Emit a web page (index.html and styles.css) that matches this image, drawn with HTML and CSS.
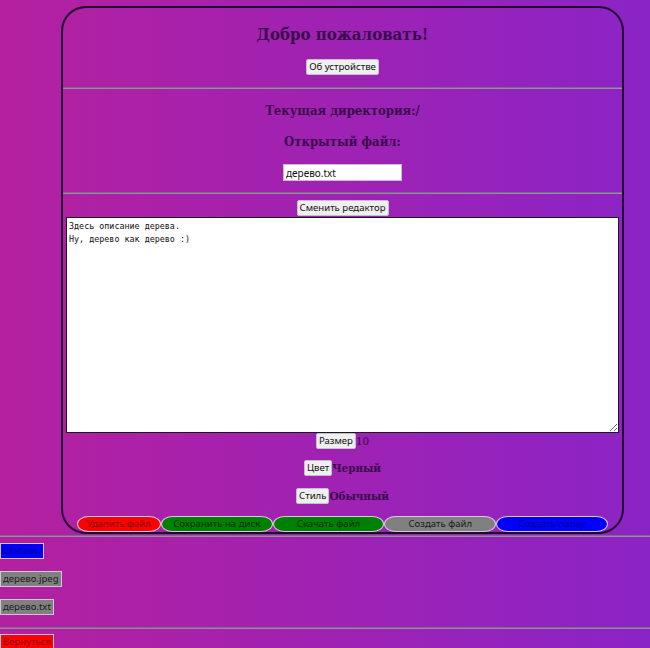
FILE: index.html
```html
<!DOCTYPE html>
<html lang="ru">
<head>
<meta charset="utf-8">
<title>Редактор</title>
<link rel="stylesheet" href="styles.css">
</head>
<body>
<main class="panel">
  <h1 class="title">Добро пожаловать!</h1>
  <div class="row row-about"><button class="btn">Об устройстве</button></div>
  <hr class="rule rule-1">
  <h3 class="sub sub-dir">Текущая директория:/</h3>
  <h3 class="sub sub-file">Открытый файл:</h3>
  <div class="row row-input"><input class="name" type="text" value="дерево.txt"></div>
  <hr class="rule rule-2">
  <div class="row row-switch"><button class="btn">Сменить редактор</button></div>
  <div class="editor-wrap"><textarea class="editor">Здесь описание дерева.
Ну, дерево как дерево :)</textarea></div>
  <div class="row row-size"><button class="btn">Размер</button><span class="val val-plain">10</span></div>
  <div class="row row-opt"><button class="btn">Цвет</button><span class="val">Черный</span></div>
  <div class="row row-opt"><button class="btn">Стиль</button><span class="val">Обычный</span></div>
  <div class="actions">
    <button class="act act-red act-narrow">Удалить файл</button>
    <button class="act act-green">Сохранить на диск</button>
    <button class="act act-green">Скачать файл</button>
    <button class="act act-gray">Создать файл</button>
    <button class="act act-blue">Создать папку</button>
  </div>
</main>
<hr class="rule rule-full rule-3">
<div class="files">
  <button class="file file-blue">Шаблон</button>
  <button class="file file-gray">дерево.jpeg</button>
  <button class="file file-gray">дерево.txt</button>
</div>
<hr class="rule rule-full rule-4">
<button class="file file-red">Вернуться</button>
</body>
</html>
```
FILE: styles.css
```css
html, body {
  margin: 0;
  padding: 0;
}
body {
  min-height: 648px;
  background: linear-gradient(to right, #b4209f, #8b24c6);
  font-family: "DejaVu Serif Condensed", "DejaVu Serif", serif;
  font-stretch: condensed;
  color: #3a0a4c;
  overflow: hidden;
}
.panel {
  box-sizing: border-box;
  height: 528px;
  margin: 6px 26px 0 61px;
  border: 2px solid #230532;
  border-radius: 25px;
  text-align: center;
  display: flex;
  flex-direction: column;
  align-items: stretch;
}
.title {
  margin: 14px 0 0;
  font-size: 16.7px;
  line-height: 24px;
  font-weight: bold;
}
.row {
  display: flex;
  justify-content: center;
  align-items: center;
  height: 16px;
}
.row-about { margin-top: 13px; }
.rule {
  height: 0;
  margin: 0;
  border: 0;
  border-top: 1px solid #7a6a86;
  border-bottom: 1px solid #9a8aa6;
}
.rule-1 { margin-top: 12px; }
.sub {
  margin: 13px 0 0;
  font-size: 13px;
  line-height: 18px;
  font-weight: bold;
}
.row-input { margin-top: 13px; height: 17px; }
.rule-2 { margin-top: 11px; }
.row-switch { margin-top: 6px; }
.btn {
  box-sizing: border-box;
  height: 16px;
  padding: 0 2px;
  font-family: "Noto Sans", sans-serif;
  font-stretch: normal;
  font-size: 9.6px;
  line-height: 14px;
  color: #111;
  background: #efefef;
  border: 1px solid #c9bccf;
  border-radius: 2px;
}
.name {
  box-sizing: border-box;
  width: 119px;
  height: 17px;
  padding: 0 2px;
  font-family: "Noto Sans", sans-serif;
  font-stretch: normal;
  font-size: 10px;
  color: #111;
  background: #fff;
  border: 1px solid #c9bccf;
  border-radius: 0;
}
.editor-wrap {
  margin-top: 1px;
  padding: 0 3px;
  display: flex;
}
.editor {
  box-sizing: border-box;
  width: 100%;
  height: 216px;
  margin: 0;
  padding: 2px 2px;
  font-family: "DejaVu Sans Mono", monospace;
  font-stretch: normal;
  font-size: 8.4px;
  line-height: 13px;
  color: #111;
  background: #fff;
  border: 1px solid #1a1a1a;
  resize: both;
}
.row-size { margin-top: 0; }
.row-opt { margin-top: 11px; }
.row-opt + .row-opt { margin-top: 12px; }
.val {
  font-size: 11.5px;
  font-weight: bold;
  line-height: 16px;
  color: #3a0a4c;
}
.val-plain { font-weight: normal; }
.actions {
  margin-top: auto;
  margin-bottom: 0;
  display: flex;
  justify-content: center;
}
.act {
  box-sizing: border-box;
  width: 20%;
  height: 16px;
  padding: 0;
  font-family: "Noto Sans", sans-serif;
  font-stretch: normal;
  font-size: 9.6px;
  line-height: 14px;
  border: 1px solid #d9c9df;
  border-radius: 12px / 8px;
}
.act-narrow { width: 15%; }
.act-red { background: #ff0000; color: #8a0000; }
.act-green { background: #008000; color: #003200; }
.act-gray { background: #808080; color: #1a1a1a; }
.act-blue { background: #0000ff; color: #00008a; }
.rule-full { width: 100%; }
.rule-3 { margin-top: 1px; }
.files {
  display: flex;
  flex-direction: column;
  align-items: flex-start;
  gap: 12px;
  margin-top: 6px;
}
.rule-4 { margin-top: 12px; }
.file {
  box-sizing: border-box;
  height: 16px;
  padding: 0 2px;
  font-family: "Noto Sans", sans-serif;
  font-stretch: normal;
  font-size: 9.6px;
  line-height: 14px;
  border: 1px solid #d0c4d6;
  border-radius: 0;
}
.file-blue { background: #0000ff; color: #00008a; }
.file-gray { background: #808080; color: #1a1a1a; }
.file-red { margin-top: 5px; background: #ff0000; color: #8a0000; }
```
